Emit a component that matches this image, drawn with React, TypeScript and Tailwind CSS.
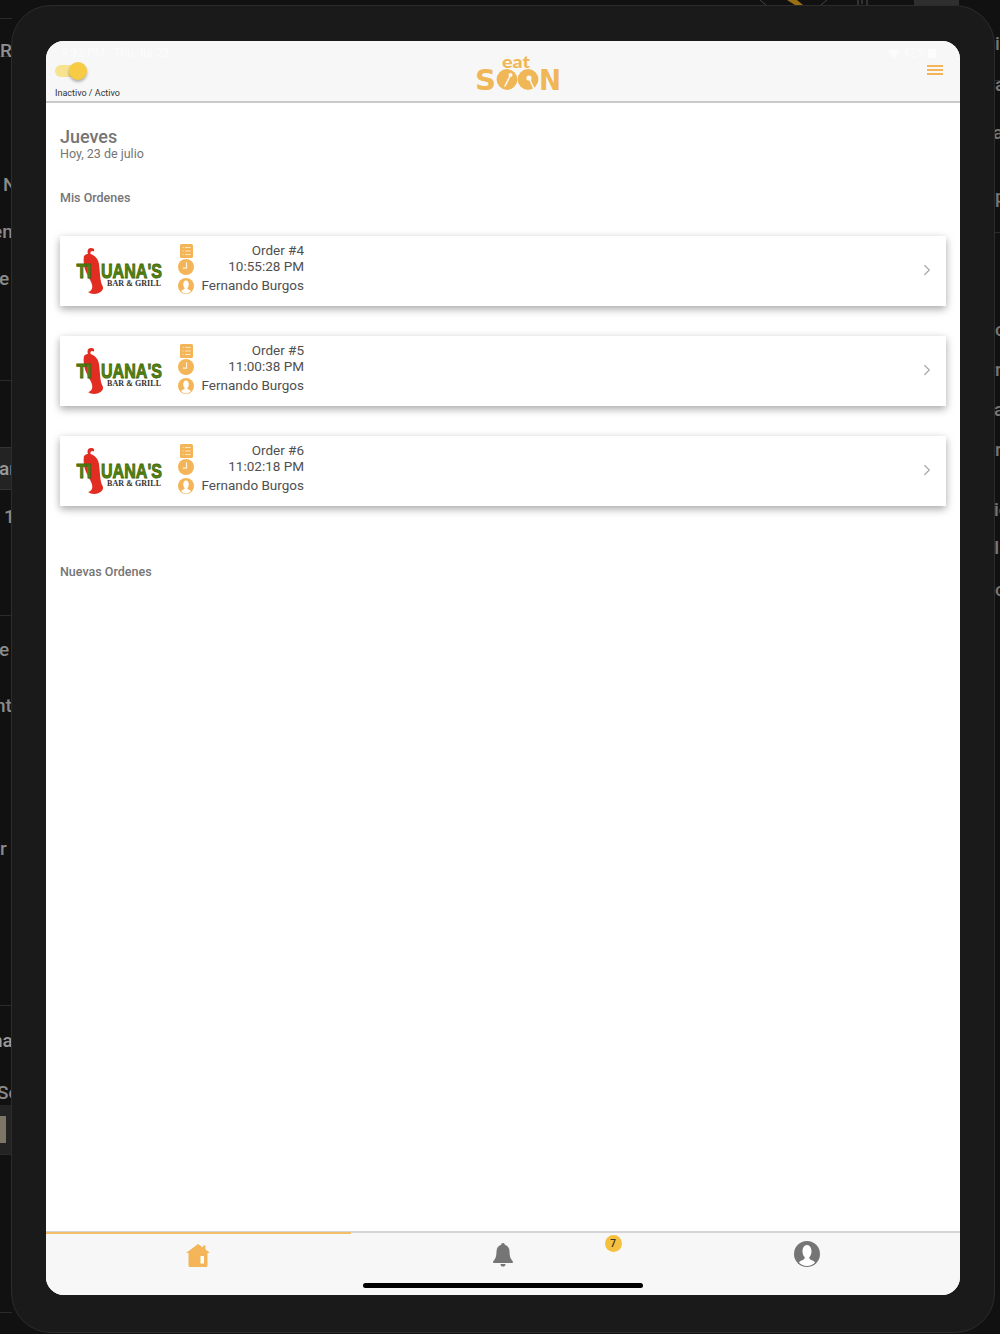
import React from "react";
import { ChevronRight } from "lucide-react";

const leftFragments = [
  { t: "R", c: "top-[40px] left-0 text-[19px] text-[#8f8f8f]" },
  { t: "N", c: "top-[174px] left-[3px] text-[19px] text-[#8a8a8a]" },
  { t: "en", c: "top-[221px] -left-[8px] text-[19px] text-[#8a8a8a]" },
  { t: "e", c: "top-[268px] -left-[1px] text-[19px] text-[#8a8a8a]" },
  { t: "ar", c: "top-[458px] -left-[1px] text-[19px] text-[#9a9a9a]" },
  { t: "1", c: "top-[506px] left-[4px] text-[19px] text-[#8a8a8a]" },
  { t: "e", c: "top-[639px] -left-[1px] text-[19px] text-[#8a8a8a]" },
  { t: "nt", c: "top-[695px] -left-[5px] text-[19px] text-[#8a8a8a]" },
  { t: "r", c: "top-[838px] left-0 text-[19px] text-[#8a8a8a]" },
  { t: "na", c: "top-[1030px] -left-[8px] text-[19px] text-[#9a9a9a]" },
  { t: "Sc", c: "top-[1082px] -left-[3px] text-[19px] text-[#8a8a8a]" },
  { t: "ic", c: "top-[33px] left-[995px] text-[19px] text-[#777]" },
  { t: "a", c: "top-[74px] left-[995px] text-[19px] text-[#777]" },
  { t: "a", c: "top-[122px] left-[993px] text-[19px] text-[#777]" },
  { t: "p", c: "top-[186px] left-[995px] text-[19px] text-[#777]" },
  { t: "c", c: "top-[319px] left-[995px] text-[19px] text-[#777]" },
  { t: "r", c: "top-[359px] left-[995px] text-[19px] text-[#777]" },
  { t: "a", c: "top-[399px] left-[994px] text-[19px] text-[#777]" },
  { t: "r", c: "top-[439px] left-[995px] text-[19px] text-[#777]" },
  { t: "ic", c: "top-[499px] left-[994px] text-[19px] text-[#777]" },
  { t: "Is", c: "top-[537px] left-[994px] text-[19px] text-[#777]" },
  { t: "c", c: "top-[579px] left-[995px] text-[19px] text-[#777]" },
];

const leftLines = [
  "top-[18px]", "top-[56px]", "top-[380px]", "top-[615px]", "top-[1005px]", "top-[1154px]", "top-[1312px]",
];

function Backdrop() {
  return (
    <>
      <div className="absolute left-0 top-[447px] w-[12px] h-[43px] bg-[#232323] border-y border-[#333]" />
      <div className="absolute left-0 top-[1105px] w-[12px] h-[49px] bg-[#232323]" />
      <div className="absolute left-0 top-[1116px] w-[6px] h-[27px] bg-[#7d7566]" />
      {leftLines.map((c) => (
        <div key={c} className={`absolute left-0 w-[12px] h-px bg-[#2b2b2b] ${c}`} />
      ))}
      <div className="absolute left-[990px] top-[80px] w-[10px] h-px bg-[#2b2b2b]" />
      <div className="absolute left-[990px] top-[232px] w-[10px] h-px bg-[#2b2b2b]" />
      <div className="absolute left-[990px] top-[367px] w-[10px] h-px bg-[#2b2b2b]" />
      {leftFragments.map((f) => (
        <span key={f.c} className={`absolute leading-[22px] font-medium ${f.c}`}>{f.t}</span>
      ))}
      <svg className="absolute left-[755px] top-0" width="120" height="6" viewBox="0 0 120 6">
        <path d="M32 0 L40 5 H48 L42 0 Z" fill="#9a6f14" />
        <path d="M5 0 L11 5 M72 0 L66 5" stroke="#444" strokeWidth="1" fill="none" />
        <path d="M103 0 V5 M112 0 V5 M107 0 V4" stroke="#555" strokeWidth="1" fill="none" />
      </svg>
      <div className="absolute left-[914px] top-0 w-[45px] h-[5px] bg-[#2f2f2f]" />
    </>
  );
}

function EatSoonLogo() {
  return (
    <svg width="88" height="38" viewBox="0 0 88 38" aria-label="eat soon">
      <text x="27" y="12.5" fontFamily="Lato, sans-serif" fontWeight="900" fontSize="16" fill="#f0b757" textLength="28" lengthAdjust="spacingAndGlyphs">eat</text>
      <text x="0" y="35" fontFamily="'DejaVu Sans', sans-serif" fontWeight="700" fontSize="29" fill="#f0b757" textLength="21" lengthAdjust="spacingAndGlyphs">S</text>
      <circle cx="32" cy="24.5" r="10.4" fill="#f0b757" />
      <path d="M35 21 L30 31" stroke="#f7f7f7" strokeWidth="1.6" strokeLinecap="round" />
      <circle cx="35.5" cy="20" r="2" fill="#f7f7f7" />
      <circle cx="53" cy="24.5" r="10.4" fill="#f0b757" />
      <circle cx="54" cy="23" r="2.6" fill="#f7f7f7" />
      <path d="M55 25 L59 34" stroke="#f7f7f7" strokeWidth="1.6" />
      <text x="64" y="35" fontFamily="'DejaVu Sans', sans-serif" fontWeight="700" fontSize="29" fill="#f0b757" textLength="22" lengthAdjust="spacingAndGlyphs">N</text>
    </svg>
  );
}

function TijuanaLogo() {
  return (
    <svg width="88" height="48" viewBox="0 0 88 48" className="shrink-0" aria-label="Tijuana's Bar and Grill">
      <path d="M8 9 C10 7 11.5 7 12 7 C11 4.5 11.5 1 15 1 C18 1 19 3 17.5 4.5 C16 3.3 14 3.8 14.5 7 C18 8 22 11 23 17 C24 25 24 33 26 38 C28 41 27 43 24.5 45 C21 47.5 15 47.5 12 45 C15.5 44.5 17.5 41 15.5 36 C13 30 9 25 8 18 C7.5 14 7.5 11 8 9 Z" fill="#e12d22" />
      <g stroke="#3f6a0b" strokeWidth="0.9" fill="#55840f" fontFamily="'Liberation Sans', sans-serif" fontWeight="700" fontSize="21">
        <text x="0.5" y="31" textLength="15" lengthAdjust="spacingAndGlyphs">TI</text>
        <text x="25" y="31" textLength="61" lengthAdjust="spacingAndGlyphs">UANA'S</text>
      </g>
      <text x="31" y="39" fontFamily="'Liberation Serif', serif" fontWeight="700" fontSize="8" fill="#333" textLength="54" lengthAdjust="spacing">BAR &amp; GRILL</text>
    </svg>
  );
}

function ListIcon() {
  return (
    <svg width="13" height="14" viewBox="0 0 13 14">
      <rect width="13" height="14" rx="1.5" fill="#f3b557" />
      <path d="M2.5 3.5H3.5M5 3.5H10.5M2.5 7H3.5M5 7H10.5M2.5 10.5H3.5M5 10.5H10.5" stroke="#fbe6c4" strokeWidth="1.2" />
    </svg>
  );
}

function ClockIcon() {
  return (
    <svg width="16" height="16" viewBox="0 0 15 15">
      <circle cx="7.5" cy="7.5" r="7.5" fill="#f3b557" />
      <path d="M8 3V8.5H4.5" stroke="#fdf1dd" strokeWidth="1.1" fill="none" />
    </svg>
  );
}

function UserIcon({ size, fill }: { size: number; fill: string }) {
  return (
    <svg width={size} height={size} viewBox="0 0 26 26">
      <circle cx="13" cy="13" r="13" fill={fill} />
      <path d="M13 4C10 4 8.5 7 8.5 10.5C8.5 13 9.6 15.2 10.8 16.4C10.8 18 9.6 18.7 7.5 19.5C6 20.1 5.3 20.8 5 21.6C7 23.7 9.8 25 13 25C16.2 25 19 23.7 21 21.6C20.7 20.8 20 20.1 18.5 19.5C16.4 18.7 15.2 18 15.2 16.4C16.4 15.2 17.5 13 17.5 10.5C17.5 7 16 4 13 4Z" fill="#ffffff" />
    </svg>
  );
}

function OrderCard({ order, time }: { order: string; time: string }) {
  return (
    <div className="flex items-center h-[70px] bg-white pl-[16px] pr-[10px] shadow-[0_3px_8px_rgba(0,0,0,0.35)]">
      <TijuanaLogo />
      <div className="ml-[14px] w-[126px] h-full pt-[7px] flex flex-col text-[13.5px] text-[#505050]">
        <div className="h-[16px] flex items-center justify-between">
          <span className="w-[16px] flex justify-center"><ListIcon /></span>
          <span className="-mt-[2px]">{order}</span>
        </div>
        <div className="h-[16px] flex items-center justify-between">
          <span className="w-[16px] flex justify-center"><ClockIcon /></span>
          <span className="-mt-[2px]">{time}</span>
        </div>
        <div className="h-[22px] flex items-center justify-between">
          <span className="w-[16px] flex justify-center"><UserIcon size={16} fill="#f3b557" /></span>
          <span className="-mt-[2px]">Fernando Burgos</span>
        </div>
      </div>
      <ChevronRight className="ml-auto -mt-[2px] text-[#a8a8a8]" size={18} strokeWidth={1.6} />
    </div>
  );
}

export default function App() {
  return (
    <div className="relative w-[1000px] h-[1334px] overflow-hidden bg-[#111111] pl-[11px] pt-[5px] font-['Roboto',sans-serif]">
      <Backdrop />
      <div className="relative w-[984px] h-[1328px] rounded-[40px] border border-[#2c2c2c] bg-[#1a1a1a] pl-[34px] pt-[35px]">
        <div className="w-[914px] h-[1254px] rounded-[18px] overflow-hidden bg-white flex flex-col relative">
          <header className="h-[62px] shrink-0 bg-[#f7f7f7] border-b-2 border-[#c9c9c9] flex pl-[9px] relative">
            <div className="absolute left-[15px] top-[3px] text-[12px] text-white/60 flex gap-[8px]">
              <span>9:32 PM</span>
              <span>Thu Jul 23</span>
            </div>
            <div className="absolute right-[24px] top-[3px] text-[12px] text-white/60 flex items-center gap-[3px]">
              <svg width="12" height="9" viewBox="0 0 12 9">
                <path d="M6 9 L0 2.5 C3.5 -.6 8.5 -.6 12 2.5 Z" fill="#ffffff" fillOpacity="0.6" />
              </svg>
              <span>42%</span>
              <div className="w-[8px] h-[9px] rounded-[1px] bg-white/60" />
            </div>
            <div className="w-[420px] shrink-0 pt-[24px]">
              <div className="relative w-[30px] h-[12px] rounded-full bg-[#f6e28f]">
                <div className="absolute left-[14px] -top-[3px] w-[18px] h-[18px] rounded-full bg-[#f8cb45] shadow-[0_2px_3px_rgba(0,0,0,0.3)]" />
              </div>
              <div className="mt-[10px] text-[9px] leading-[12px] text-[#333]">Inactivo / Activo</div>
            </div>
            <div className="pt-[14px]"><EatSoonLogo /></div>
            <div className="ml-auto mr-[17px] mt-[24px] w-[16px] h-[10px] flex flex-col justify-between">
              <div className="h-[2px] bg-[#f3b557]" />
              <div className="h-[2px] bg-[#f3b557]" />
              <div className="h-[2px] bg-[#f3b557]" />
            </div>
          </header>

          <main className="flex-1 px-[14px] pt-[24px] text-[#757575]">
            <div className="text-[18px] leading-[20px] font-medium">Jueves</div>
            <div className="text-[12.5px] leading-[16px] -mt-[1px]">Hoy, 23 de julio</div>
            <div className="mt-[28px] text-[12.5px] leading-[16px] font-medium">Mis Ordenes</div>
            <div className="mt-[30px] flex flex-col gap-[30px]">
              <OrderCard order="Order #4" time="10:55:28 PM" />
              <OrderCard order="Order #5" time="11:00:38 PM" />
              <OrderCard order="Order #6" time="11:02:18 PM" />
            </div>
            <div className="mt-[58px] text-[12.5px] leading-[16px] font-medium">Nuevas Ordenes</div>
          </main>

          <nav className="h-[64px] shrink-0 bg-[#f7f7f7] border-t-2 border-[#d4d4d4] grid grid-cols-3 relative">
            <div className="relative -mt-px border-t-2 border-[#f3bd6a] flex justify-center pt-[10px]">
              <svg width="24" height="23" viewBox="0 0 24 23">
                <path d="M12 0 L17 3.6 V1.5 H19.5 V5.4 L24 9 H21.5 V21.5 C21.5 22.3 21 23 20 23 H4 C3 23 2.5 22.3 2.5 21.5 V9 H0 Z" fill="#f3b557" />
                <rect x="14.5" y="12" width="3.5" height="7.5" fill="#ffffff" />
              </svg>
            </div>
            <div className="relative flex justify-center pt-[10px]">
              <svg width="20" height="24" viewBox="0 0 20 24">
                <path d="M10 0C8.9 0 8.2 .8 8.2 1.7C5.2 2.6 3.5 5.2 3.5 8.5C3.5 13 2.6 15.8 .3 18.3C-.2 19 .2 20 1.1 20H18.9C19.8 20 20.2 19 19.7 18.3C17.4 15.8 16.5 13 16.5 8.5C16.5 5.2 14.8 2.6 11.8 1.7C11.8 .8 11.1 0 10 0Z" fill="#757575" />
                <path d="M7.5 21H12.5C12.5 22.6 11.4 23.6 10 23.6C8.6 23.6 7.5 22.6 7.5 21Z" fill="#757575" />
              </svg>
              <div className="absolute left-[254px] top-[2px] w-[17px] h-[17px] rounded-full bg-[#f6c03f] flex items-center justify-center text-[10px] font-medium text-[#333]">7</div>
            </div>
            <div className="flex justify-center pt-[8px] pr-px">
              <UserIcon size={26} fill="#757575" />
            </div>
            <div className="absolute left-[317px] top-[50px] w-[280px] h-[5px] rounded-full bg-black" />
          </nav>
        </div>
      </div>
    </div>
  );
}
